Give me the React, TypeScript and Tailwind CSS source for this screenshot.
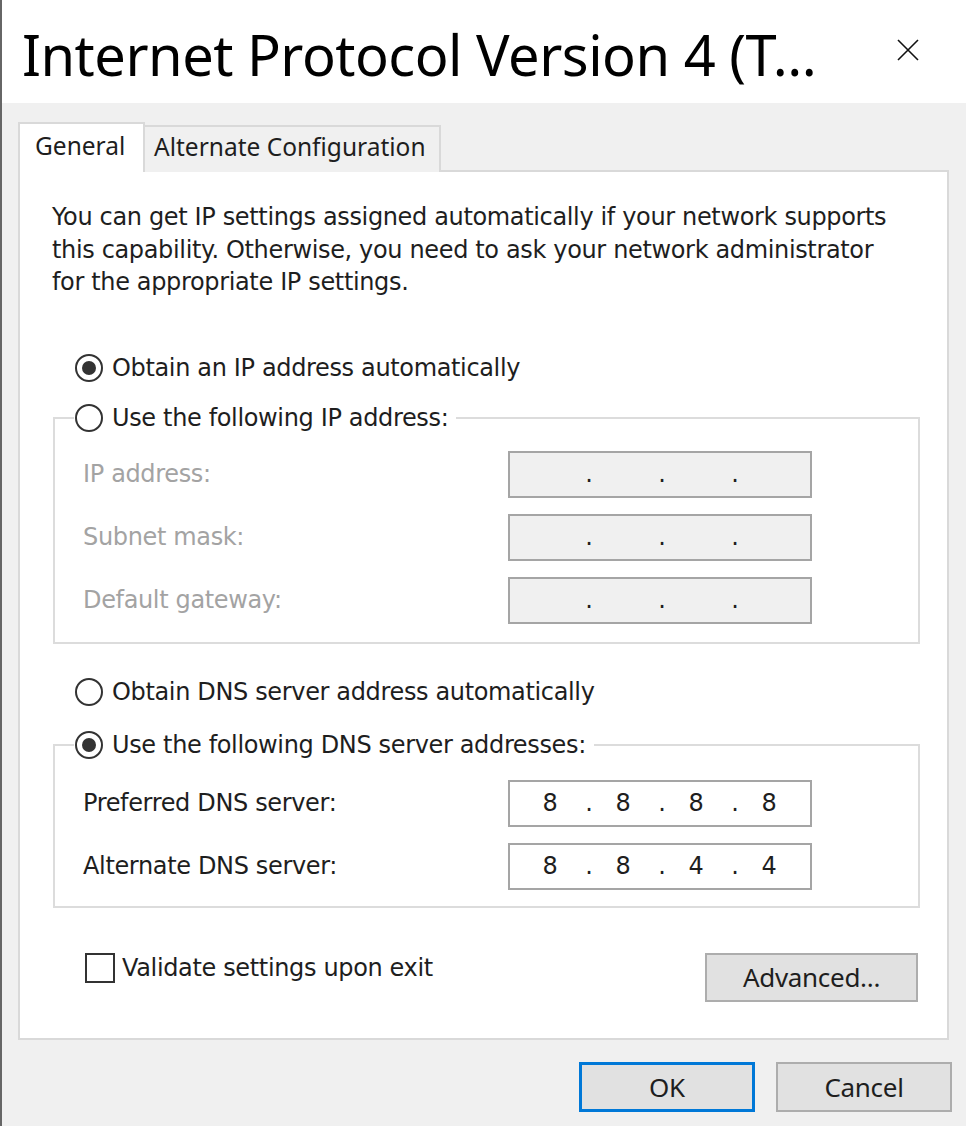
import React from 'react';

const Radio = ({ checked }: { checked?: boolean }) => (
  <span className="w-[28px] h-[28px] rounded-full border-2 border-[#333] bg-white flex items-center justify-center shrink-0">
    {checked && <span className="w-[14px] h-[14px] rounded-full bg-[#333]" />}
  </span>
);

const IpBox = ({ parts, disabled }: { parts: string[]; disabled?: boolean }) => (
  <div
    className={`w-[304px] h-[47px] border-2 border-[#a5a5a5] flex items-center pl-[22px] text-[24px] text-[#1e1e1e] ${
      disabled ? 'bg-[#f0f0f0]' : 'bg-white'
    }`}
  >
    {parts.map((p, i) => (
      <React.Fragment key={i}>
        <span className="w-[36px] text-center">{p}</span>
        {i < 3 && <span className="w-[37px] pl-[5px] text-center">.</span>}
      </React.Fragment>
    ))}
  </div>
);

const FieldRow = ({ label, parts, disabled }: { label: string; parts: string[]; disabled?: boolean }) => (
  <div className="flex items-center">
    <span className={`w-[425px] ${disabled ? 'text-[#a3a3a3]' : 'text-[#1e1e1e]'}`}>{label}</span>
    <IpBox parts={parts} disabled={disabled} />
  </div>
);

export default function App() {
  const empty = ['', '', '', ''];
  return (
    <div className="w-[966px] h-[1126px] bg-[#f0f0f0] border-l-2 border-[#666] flex flex-col font-['DejaVu_Sans',sans-serif] text-[24px] tracking-[-0.35px] text-[#1e1e1e] overflow-hidden">
      {/* title bar */}
      <div className="h-[103px] bg-white flex items-center justify-between pl-[20px] pr-[46px] shrink-0">
        <span className="font-['Noto_Sans',sans-serif] text-[56px] text-black leading-none tracking-[-0.5px] mt-[4px]">
          Internet Protocol Version 4 (T...
        </span>
        <svg width="24" height="24" viewBox="0 0 24 24" className="mt-[-4px]">
          <path d="M2 2 L22 22 M22 2 L2 22" stroke="#111" strokeWidth="1.6" fill="none" />
        </svg>
      </div>

      <div className="flex-1 flex flex-col pl-[16px] pr-[14px] pt-[19px]">
        {/* tabs */}
        <div className="flex items-end h-[50px] -mb-[2px] relative z-10 font-['Noto_Sans',sans-serif] text-[24.5px] tracking-normal">
          <div className="w-[127px] h-[50px] bg-white border-2 border-b-0 border-[#d9d9d9] pl-[15px] pt-[4px]">General</div>
          <div className="w-[296px] h-[47px] bg-[#f0f0f0] border-2 border-l-0 border-b-0 border-[#d9d9d9] pl-[9px] pt-[2px]">
            Alternate Configuration
          </div>
        </div>

        {/* panel */}
        <div className="w-[931px] h-[870px] bg-white border-2 border-[#d9d9d9] flex flex-col pt-[29px] shrink-0">
          <p className="pl-[32px] leading-[32.5px]">
            You can get IP settings assigned automatically if your network supports
            <br />
            this capability. Otherwise, you need to ask your network administrator
            <br />
            for the appropriate IP settings.
          </p>

          <div className="flex items-center gap-[9px] pl-[55px] mt-[53px] h-[32px]">
            <Radio checked />
            <span>Obtain an IP address automatically</span>
          </div>

          <fieldset className="ml-[33px] mr-[27px] mt-[18px] border-2 border-[#dcdcdc] pb-[18px]">
            <legend className="ml-[19px] pl-[1px] pr-[8px] h-[32px] flex items-center gap-[9px]">
              <Radio />
              <span>Use the following IP address:</span>
            </legend>
            <div className="pl-[28px] pt-[17px] flex flex-col gap-[16px]">
              <FieldRow label="IP address:" parts={empty} disabled />
              <FieldRow label="Subnet mask:" parts={empty} disabled />
              <FieldRow label="Default gateway:" parts={empty} disabled />
            </div>
          </fieldset>

          <div className="flex items-center gap-[9px] pl-[55px] mt-[32px] h-[32px]">
            <Radio />
            <span>Obtain DNS server address automatically</span>
          </div>

          <fieldset className="ml-[33px] mr-[27px] mt-[21px] border-2 border-[#dcdcdc] pb-[16px]">
            <legend className="ml-[19px] pl-[1px] pr-[8px] h-[32px] flex items-center gap-[9px]">
              <Radio checked />
              <span>Use the following DNS server addresses:</span>
            </legend>
            <div className="pl-[28px] pt-[19px] flex flex-col gap-[16px]">
              <FieldRow label="Preferred DNS server:" parts={['8', '8', '8', '8']} />
              <FieldRow label="Alternate DNS server:" parts={['8', '8', '4', '4']} />
            </div>
          </fieldset>

          <div className="flex items-start justify-between pl-[65px] pr-[29px] mt-[45px]">
            <div className="flex items-center gap-[7px] h-[30px]">
              <span className="w-[30px] h-[30px] border-2 border-[#333] bg-white" />
              <span>Validate settings upon exit</span>
            </div>
            <button className="w-[213px] h-[49px] bg-[#e1e1e1] border-2 border-[#adadad] font-['Noto_Sans',sans-serif] text-[26px] tracking-[-0.3px]">
              Advanced...
            </button>
          </div>
        </div>

        {/* dialog buttons */}
        <div className="flex justify-end gap-[21px] mt-[22px] font-['Noto_Sans',sans-serif] text-[26px] tracking-[-0.3px]">
          <button className="w-[176px] h-[50px] bg-[#e1e1e1] border-[3px] border-[#0078d7]">OK</button>
          <button className="w-[176px] h-[50px] bg-[#e1e1e1] border-2 border-[#adadad]">Cancel</button>
        </div>
      </div>
    </div>
  );
}
